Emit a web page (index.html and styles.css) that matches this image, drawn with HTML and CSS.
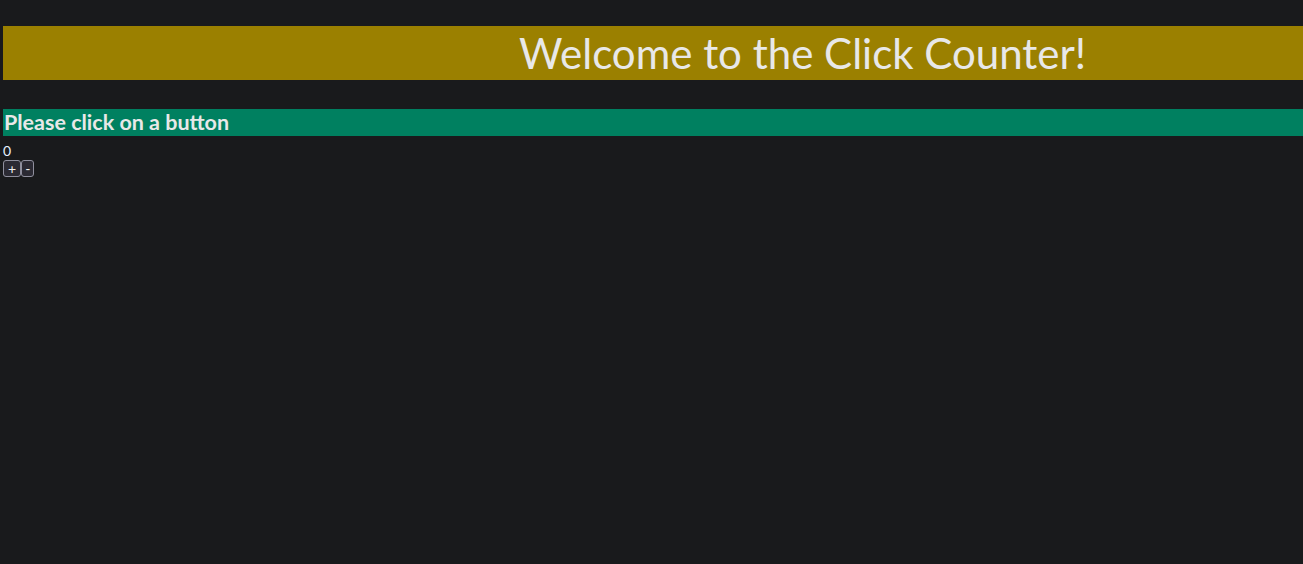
FILE: index.html
```html
<!DOCTYPE html>
<html>
<head>
<meta charset="utf-8">
<link rel="stylesheet" href="styles.css">
</head>
<body>
<div class="app">
  <h1 class="title">Welcome to the Click Counter!</h1>
  <h2 class="prompt">Please click on a button</h2>
  <div class="count">0</div>
  <div class="buttons">
    <button class="btn">+</button><button class="btn">-</button>
  </div>
</div>
</body>
</html>
```
FILE: styles.css
```css
html, body {
  margin: 0;
  padding: 0;
  background: #191a1c;
  color: #e6e6e6;
  font-family: Lato, "Open Sans", sans-serif;
  overflow: hidden;
}
.app {
  padding: 26px 0 0 3px;
}
.title {
  margin: 0;
  height: 54px;
  line-height: 54px;
  background: #9b8000;
  color: #e8e8e8;
  font-size: 42px;
  font-weight: 400;
  text-align: center;
  padding-left: 299px;
}
.prompt {
  margin: 29px 0 0 0;
  height: 27px;
  line-height: 27px;
  background: #008060;
  color: #e8e8e8;
  font-size: 21.5px;
  font-weight: 700;
  padding-left: 1px;
}
.count {
  margin-top: 6px;
  font-size: 14px;
  line-height: 18px;
  color: #e8f0ff;
}
.buttons {
  display: flex;
}
.btn {
  margin: 0;
  padding: 0 4px;
  height: 17px;
  font-family: inherit;
  font-size: 14px;
  line-height: 15px;
  color: #f0f0f0;
  background: #2b2a33;
  border: 1px solid #8f8f9d;
  border-radius: 3px;
}
.btn + .btn {
  padding: 0 3px;
}
```
